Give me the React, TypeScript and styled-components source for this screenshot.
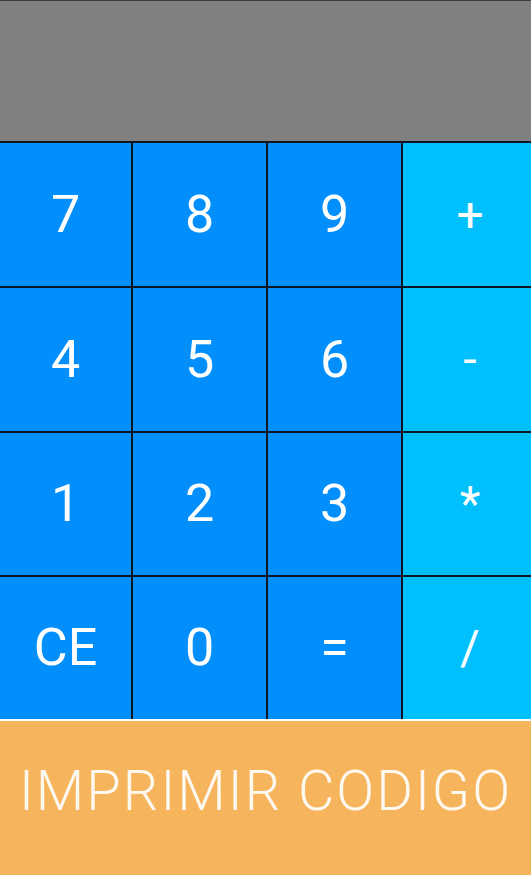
import React from "react";
import styled, { createGlobalStyle } from "styled-components";

const Global = createGlobalStyle`
  html, body { margin: 0; padding: 0; background: #ffffff; }
  body { font-family: Roboto, "Noto Sans", sans-serif; }
`;

const Screen = styled.div`
  width: 531px;
  height: 875px;
  display: flex;
  flex-direction: column;
  overflow: hidden;
`;

const Display = styled.div`
  height: 141px;
  background: #808080;
  border-top: 1px solid #3a3d44;
  box-sizing: border-box;
`;

const Keypad = styled.div`
  display: grid;
  grid-template-columns: 131px 133px 133px 1fr;
  grid-template-rows: 143px 143px 142px 142px;
  gap: 2px;
  padding-top: 2px;
  background: #0c1620;
`;

const Key = styled.button<{ $op?: boolean }>`
  border: none;
  margin: 0;
  padding: 0 0 0 ${(p) => (p.$op ? "6px" : "0")};
  background: ${(p) => (p.$op ? "#00bffd" : "#028ffc")};
  color: #ffffff;
  font-family: Roboto, "Noto Sans", sans-serif;
  font-size: ${(p) => (p.$op ? "48px" : "52px")};
  font-weight: 400;
  display: flex;
  align-items: center;
  justify-content: center;
  line-height: 1;
`;

const Divider = styled.div`
  height: 2px;
  background: #ffffff;
`;

const PrintButton = styled.button`
  flex: 1;
  border: none;
  margin: 0;
  padding: 0 0 14px 0;
  background: #f6b55c;
  color: #fdf8f0;
  font-family: Roboto, "Noto Sans", sans-serif;
  font-weight: 300;
  font-size: 56px;
  letter-spacing: 2px;
  display: flex;
  align-items: center;
  justify-content: center;
`;

const keys: { label: string; op?: boolean }[] = [
  { label: "7" }, { label: "8" }, { label: "9" }, { label: "+", op: true },
  { label: "4" }, { label: "5" }, { label: "6" }, { label: "-", op: true },
  { label: "1" }, { label: "2" }, { label: "3" }, { label: "*", op: true },
  { label: "CE" }, { label: "0" }, { label: "=" }, { label: "/", op: true },
];

export default function App() {
  return (
    <>
      <Global />
      <Screen>
        <Display />
        <Keypad>
          {keys.map((k) => (
            <Key key={k.label} $op={k.op}>
              {k.label}
            </Key>
          ))}
        </Keypad>
        <Divider />
        <PrintButton>IMPRIMIR CODIGO</PrintButton>
      </Screen>
    </>
  );
}
